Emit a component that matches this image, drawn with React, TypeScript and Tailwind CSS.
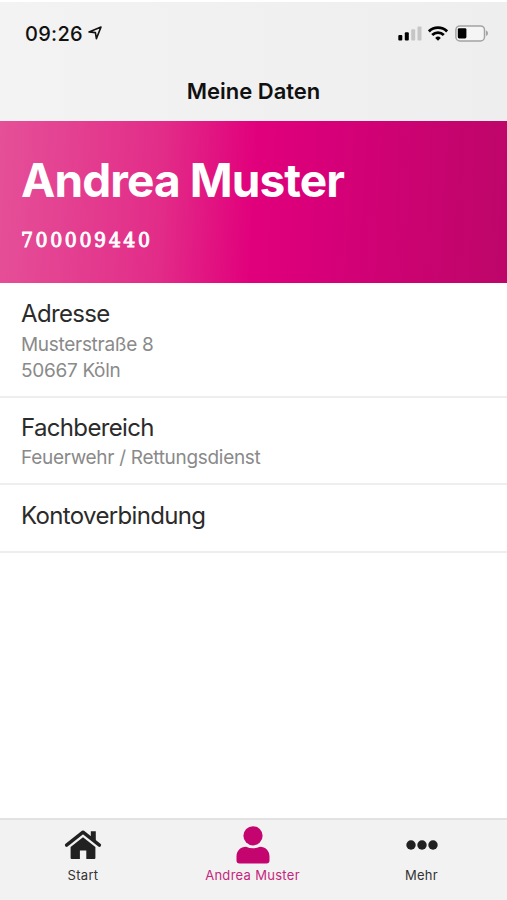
import type { ReactNode } from "react"

const LocationIcon = () => (
    <svg className="w-[14px] h-[14px] ml-[5px]" viewBox="0 0 14 14" fill="none" stroke="#111" strokeWidth="1.6" strokeLinejoin="round">
        <path d="M1 5.9 13 1 8.4 12.6 7.4 6.6Z" />
    </svg>
)

const SignalIcon = () => (
    <svg className="w-[24px] h-[15px]" viewBox="0 0 24 15">
        <rect x="0.3" y="9" width="4" height="5.6" rx="1" fill="#000" />
        <rect x="6.8" y="6.3" width="4" height="8.3" rx="1" fill="#000" />
        <rect x="13.2" y="3.3" width="4" height="11.3" rx="1" fill="#c6c6c6" />
        <rect x="19.5" y="0.5" width="4" height="14.1" rx="1" fill="#c6c6c6" />
    </svg>
)

const WifiIcon = () => (
    <svg className="w-[20px] h-[15px] ml-[6px]" viewBox="0 0 20 15" fill="none" stroke="#000" strokeWidth="2.8">
        <path d="M0.9 5.4a13 13 0 0 1 18.2 0" />
        <path d="M4.2 8.9a8.3 8.3 0 0 1 11.6 0" />
        <path d="M10 14.8 7.2 11.9a4 4 0 0 1 5.6 0Z" fill="#000" stroke="none" />
    </svg>
)

const BatteryIcon = () => (
    <svg className="w-[34px] h-[17px] ml-[7px]" viewBox="0 0 34 17">
        <rect x="0.9" y="0.9" width="28.6" height="15" rx="4" fill="#f5f5f5" stroke="#a3a3a3" strokeWidth="1.5" />
        <rect x="2.8" y="3.2" width="8.6" height="10.2" rx="1.4" fill="#000" />
        <path d="M31 5.6c2.6.6 2.6 4.9 0 5.5Z" fill="#a3a3a3" />
    </svg>
)

const HomeIcon = () => (
    <svg className="w-[38px] h-[30px]" viewBox="0 0 38 30" fill="#212121">
        <path d="M26.8 1.2H31.8V13L26.8 8.5Z" />
        <path d="M2.6 15.2 19 2.2 35.4 15.2" fill="none" stroke="#212121" strokeWidth="3.4" strokeLinecap="round" strokeLinejoin="round" />
        <path d="M19 7.2 31.4 17.1V28a1 1 0 0 1-1 1H22.3V20.6H15.9V29H7.6a1 1 0 0 1-1-1V17.1Z" />
    </svg>
)

const PersonIcon = () => (
    <svg className="w-[34px] h-[38px]" viewBox="0 0 34 38" fill="#c5056f">
        <circle cx="17" cy="9.8" r="9.6" />
        <path d="M10 20.8c4.5 2 9.5 2 14 0 5.5 0 9.5 4.2 9.5 9.7V34.5a3 3 0 0 1-3 3H3.5a3 3 0 0 1-3-3V30.5C.5 25 4.5 20.8 10 20.8Z" />
    </svg>
)

const MoreIcon = () => (
    <svg className="w-[32px] h-[10px]" viewBox="0 0 32 10" fill="#212121">
        <circle cx="5" cy="5" r="4.7" />
        <circle cx="16" cy="5" r="4.7" />
        <circle cx="27" cy="5" r="4.7" />
    </svg>
)

type RowProps = { title: string; className: string; children?: ReactNode }

const Row = ({ title, className, children }: RowProps) => (
    <section className={`px-[21px] border-b-2 border-[#eeeeee] ${className}`}>
        <h3 className="text-[24px] leading-[32px] text-[#2b2b2b] tracking-[-0.65px]">{title}</h3>
        {children}
    </section>
)

type TabProps = { label: string; active?: boolean; icon: ReactNode }

const Tab = ({ label, active, icon }: TabProps) => (
    <button className="flex flex-col items-center">
        <span className="h-[40px] mt-[5px] flex items-center justify-center">{icon}</span>
        <span className={`mt-[1px] text-[13px] leading-[18px] tracking-[0.3px] ${active ? "text-[#c5267c]" : "text-[#333]"}`}>{label}</span>
    </button>
)

export default function App() {
    return (
        <main className="w-[507px] h-[900px] bg-white flex flex-col overflow-hidden font-['Inter',sans-serif]">
            <header className="h-[121px] shrink-0 border-t-2 border-white bg-linear-to-r from-[#f3f3f3] to-[#eeeeee]">
                <div className="h-[62px] pl-[25px] pr-[18px] flex items-center justify-between">
                    <div className="flex items-center">
                        <span className="pt-px text-[20px] font-medium tracking-[0.3px] text-[#111]">09:26</span>
                        <LocationIcon />
                    </div>
                    <div className="flex items-center">
                        <SignalIcon />
                        <WifiIcon />
                        <BatteryIcon />
                    </div>
                </div>
                <h1 className="pt-[12px] text-center text-[22px] leading-[30px] font-semibold text-[#111]">Meine Daten</h1>
            </header>

            <section className="h-[162px] shrink-0 px-[21px] pt-[29px] text-white bg-[linear-gradient(93deg,#e55098_0%,#e22c88_32%,#e1007c_50%,#d60078_65%,#bd0669_100%)]">
                <h2 className="text-[46px] leading-[60px] font-bold tracking-[-0.9px]">Andrea Muster</h2>
                <p className="mt-[15px] text-[21px] leading-[30px] tracking-[2.6px] [-webkit-text-stroke:0.9px_white] font-['DejaVu_Serif_Condensed','DejaVu_Serif',serif]">700009440</p>
            </section>

            <div className="flex-1">
                <Row title="Adresse" className="h-[115px] pt-[15px]">
                    <p className="mt-[2px] text-[19px] leading-[26px] tracking-[-0.3px] text-[#8a8a8a]">Musterstraße 8<br />50667 Köln</p>
                </Row>
                <Row title="Fachbereich" className="h-[87px] pt-[14px]">
                    <p className="mt-[1px] text-[19px] leading-[26px] tracking-[-0.3px] text-[#8a8a8a]">Feuerwehr / Rettungsdienst</p>
                </Row>
                <Row title="Kontoverbindung" className="h-[68px] pt-[15px]" />
            </div>

            <nav className="h-[82px] shrink-0 grid grid-cols-[166px_173px_165px] bg-[#f2f2f2] border-t-2 border-[#e2e2e2]">
                <Tab label="Start" icon={<HomeIcon />} />
                <Tab label="Andrea Muster" active icon={<PersonIcon />} />
                <Tab label="Mehr" icon={<MoreIcon />} />
            </nav>
        </main>
    )
}
